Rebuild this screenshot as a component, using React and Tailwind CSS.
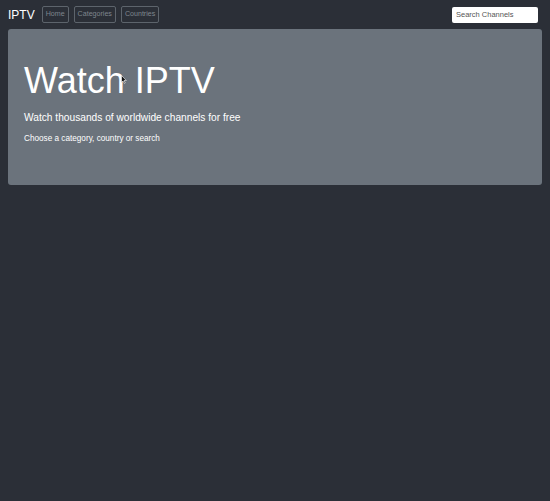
export default function App() {
  return (
    <div className="min-h-[501px] w-full bg-[#2b2f37] font-['Liberation_Sans',Arial,sans-serif]">
      {/* Barra de navegación */}
      <nav className="flex h-[29px] items-center justify-between px-2">
        <div className="flex items-center">
          <span className="mr-[7px] text-[12px] text-white">IPTV</span>
          <div className="flex gap-[5px]">
            {['Home', 'Categories', 'Countries'].map((item) => (
              <button
                key={item}
                className="h-[17px] rounded-[2px] border border-[#5d646c] px-[3px] text-[7.1px] leading-none text-[#7f868e]"
              >
                {item}
              </button>
            ))}
          </div>
        </div>
        <input
          type="text"
          placeholder="Search Channels"
          className="mr-[4px] h-[16px] w-[86px] rounded-[2px] bg-white px-[4px] text-[7.5px] text-black outline-none placeholder:text-[#555]"
        />
      </nav>

      {/* Jumbotron */}
      <div className="mx-2 h-[156px] rounded-[3px] bg-[#6b737c] px-4 pt-[34px]">
        <div className="relative inline-block">
          <h1 className="text-[36px] leading-none text-white">Watch IPTV</h1>
          <svg
            className="absolute left-[97px] top-[12px]"
            width="6"
            height="9"
            viewBox="0 0 6 9"
          >
            <path d="M0.5 0.5 L0.5 7.5 L2 6 L3.5 8.5 L4.3 8 L3 5.5 L5.3 5.5 Z" fill="#111" stroke="#fff" strokeWidth="0.6" />
          </svg>
        </div>
        <p className="mt-[10px] text-[10.2px] text-white">
          Watch thousands of worldwide channels for free
        </p>
        <p className="mt-[8px] text-[8.2px] text-white">
          Choose a category, country or search
        </p>
      </div>
    </div>
  );
}
